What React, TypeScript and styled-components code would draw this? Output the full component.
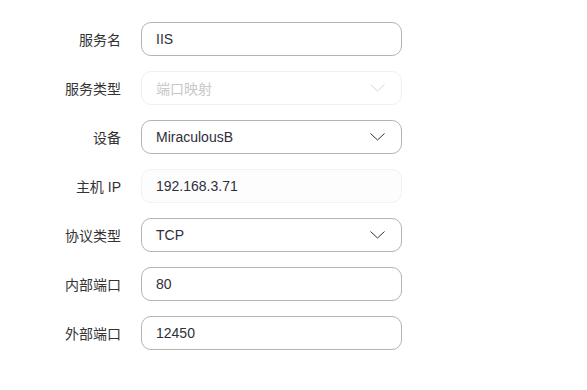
import styled, { createGlobalStyle } from "styled-components";
import { Fragment } from "react";

const GlobalStyle = createGlobalStyle`
  body {
    margin: 0;
    background: #fff;
    font-family: "Liberation Sans", "Noto Sans CJK SC", sans-serif;
  }
`;

const Form = styled.div`
  display: grid;
  grid-template-columns: 121px 261px;
  column-gap: 20px;
  row-gap: 15px;
  padding-top: 22px;
`;

const Label = styled.label`
  display: flex;
  align-items: center;
  justify-content: flex-end;
  height: 34px;
  font-size: 14px;
  color: #333;
`;

const Field = styled.div<{ $variant?: "normal" | "disabled" | "readonly" }>`
  box-sizing: border-box;
  height: 34px;
  display: flex;
  align-items: center;
  justify-content: space-between;
  padding: 0 16px 0 14px;
  border-radius: 10px;
  font-size: 14px;
  border: 1px solid
    ${(p) =>
      p.$variant === "disabled"
        ? "#f0f0f0"
        : p.$variant === "readonly"
        ? "#f2f2f2"
        : "#b3b3b3"};
  background: ${(p) => (p.$variant === "readonly" ? "#fdfdfd" : "#fff")};
  color: ${(p) => (p.$variant === "disabled" ? "#c8c8c8" : "#2f2f3a")};
`;

const Chevron = ({ light }: { light?: boolean }) => (
  <svg width="15" height="8" viewBox="0 0 15 8" fill="none">
    <path
      d="M0.5 0.5 L7.5 7 L14.5 0.5"
      stroke={light ? "#d6d6d6" : "#333"}
      strokeWidth="1"
    />
  </svg>
);

type Row = {
  label: string;
  value: string;
  select?: boolean;
  variant?: "normal" | "disabled" | "readonly";
};

const rows: Row[] = [
  { label: "服务名", value: "IIS" },
  { label: "服务类型", value: "端口映射", select: true, variant: "disabled" },
  { label: "设备", value: "MiraculousB", select: true },
  { label: "主机 IP", value: "192.168.3.71", variant: "readonly" },
  { label: "协议类型", value: "TCP", select: true },
  { label: "内部端口", value: "80" },
  { label: "外部端口", value: "12450" },
];

function App() {
  return (
    <>
      <GlobalStyle />
      <Form>
        {rows.map((r) => (
          <Fragment key={r.label}>
            <Label>{r.label}</Label>
            <Field $variant={r.variant}>
              <span>{r.value}</span>
              {r.select ? <Chevron light={r.variant === "disabled"} /> : null}
            </Field>
          </Fragment>
        ))}
      </Form>
    </>
  );
}

export default App;
